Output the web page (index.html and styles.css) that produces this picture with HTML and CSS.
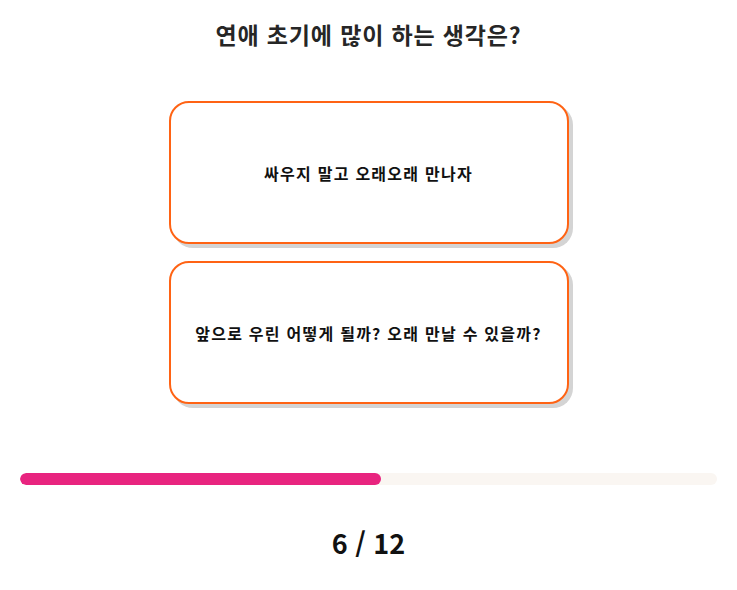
FILE: index.html
```html
<!DOCTYPE html>
<html lang="ko">
<head>
<meta charset="utf-8">
<link rel="stylesheet" href="styles.css">
</head>
<body>
<main class="page">
  <h1 class="title">연애 초기에 많이 하는 생각은?</h1>
  <div class="options">
    <button class="option">싸우지 말고 오래오래 만나자</button>
    <button class="option">앞으로 우린 어떻게 될까? 오래 만날 수 있을까?</button>
  </div>
  <div class="progress"><div class="progress-fill" style="width: 51.8%"></div></div>
  <div class="count">6 / 12</div>
</main>
</body>
</html>
```
FILE: styles.css
```css
html, body {
  margin: 0;
  padding: 0;
  background: #ffffff;
}
body {
  font-family: "Noto Sans CJK KR", "Noto Sans", sans-serif;
}
.page {
  display: flex;
  flex-direction: column;
  align-items: center;
  padding: 16px 20px 0;
}
.title {
  margin: 0;
  font-size: 23px;
  letter-spacing: 0.85px;
  font-weight: 700;
  color: #262626;
  line-height: 36px;
}
.options {
  display: flex;
  flex-direction: column;
  gap: 17px;
  margin-top: 49px;
}
.option {
  width: 400px;
  height: 143px;
  box-sizing: border-box;
  border: 2px solid #ff6314;
  border-radius: 20px;
  background: #fff;
  box-shadow: 4px 4px 0 #d4d4d4;
  font-family: inherit;
  font-size: 16px;
  letter-spacing: 1.25px;
  font-weight: 700;
  color: #111;
  padding: 0;
  cursor: pointer;
}
.progress {
  align-self: stretch;
  margin-top: 69px;
  height: 12px;
  border-radius: 6px;
  background: #faf6f2;
  overflow: hidden;
}
.progress-fill {
  height: 100%;
  background: #e8247f;
  border-radius: 6px;
}
.count {
  margin-top: 38px;
  font-size: 27px;
  font-weight: 700;
  color: #111;
  line-height: 40px;
}
```
